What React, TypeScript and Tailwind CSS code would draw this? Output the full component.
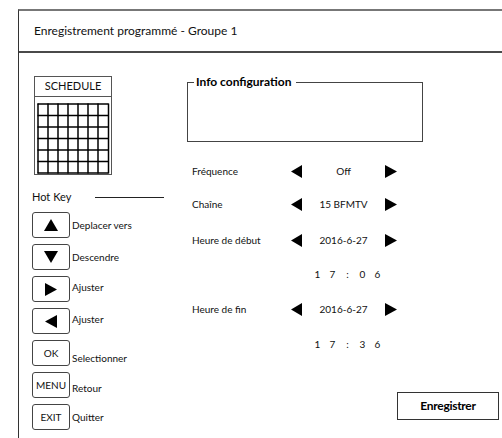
import React from 'react';

const FONT = "font-['Lato','Liberation_Sans',sans-serif]";

type Dir = 'up' | 'down' | 'left' | 'right';

function Tri({ dir, w, h }: { dir: Dir; w: number; h: number }) {
  const pts: Record<Dir, string> = {
    up: `${w / 2},0 ${w},${h} 0,${h}`,
    down: `0,0 ${w},0 ${w / 2},${h}`,
    left: `${w},0 ${w},${h} 0,${h / 2}`,
    right: `0,0 ${w},${h / 2} 0,${h}`,
  };
  return (
    <svg width={w} height={h} viewBox={`0 0 ${w} ${h}`}>
      <polygon points={pts[dir]} fill="#000" />
    </svg>
  );
}

function Schedule() {
  const cols = 7;
  const rows = 6;
  const cw = 10;
  const ch = 11.5;
  return (
    <div className="ml-[2px] w-[78px] h-[99px] border border-[#555] flex flex-col">
      <div className="h-[20px] border-b border-[#555] flex items-center justify-center text-[11px] text-[#111]">
        SCHEDULE
      </div>
      <div className="pl-[2px] pt-[6px]">
        <svg width={73} height={71} viewBox="0 0 73 71">
          {Array.from({ length: cols + 1 }).map((_, i) => (
            <line key={'c' + i} x1={1 + i * cw + (i === cols ? 0.5 : 0)} y1={0.5} x2={1 + i * cw + (i === cols ? 0.5 : 0)} y2={70.5} stroke="#000" strokeWidth={1.5} />
          ))}
          {Array.from({ length: rows + 1 }).map((_, i) => (
            <line key={'r' + i} x1={0.5} y1={1 + i * ch} x2={71.5} y2={1 + i * ch} stroke="#000" strokeWidth={1.5} />
          ))}
        </svg>
      </div>
    </div>
  );
}

const keys: { icon: React.ReactNode; label: string; shift: string }[] = [
  { icon: <Tri dir="up" w={14} h={12} />, label: 'Deplacer vers', shift: '' },
  { icon: <Tri dir="down" w={14} h={12} />, label: 'Descendre', shift: '' },
  { icon: <Tri dir="right" w={12} h={13} />, label: 'Ajuster', shift: '-translate-y-[2px]' },
  { icon: <Tri dir="left" w={12} h={13} />, label: 'Ajuster', shift: '-translate-y-[2px]' },
  { icon: <span className="text-[10px]">OK</span>, label: 'Selectionner', shift: 'translate-y-[5px]' },
  { icon: <span className="text-[10px]">MENU</span>, label: 'Retour', shift: 'translate-y-[3px]' },
  { icon: <span className="text-[10px]">EXIT</span>, label: 'Quitter', shift: '' },
];

function Row({ label, value }: { label: string; value: string }) {
  return (
    <div className="h-[20px] flex items-center text-[10px] text-[#111]">
      <div className="w-[104px] pl-[5px]">{label}</div>
      <Tri dir="left" w={11} h={13} />
      <div className="w-[83px] text-center">{value}</div>
      <Tri dir="right" w={12} h={13} />
    </div>
  );
}

function Time({ digits }: { digits: string[] }) {
  return (
    <div className="h-[20px] flex items-center text-[10px] text-[#111]">
      <div className="w-[123px]" />
      {digits.map((d, i) => (
        <span key={i} className="w-[15px] text-center">{d}</span>
      ))}
    </div>
  );
}

export default function App() {
  return (
    <div className={`${FONT} w-[502px] h-[438px] bg-white overflow-hidden pt-[9px] pl-[18px]`}>
      <div className="h-[429px] border-l border-t-2 border-l-[#333] border-t-[#777] flex flex-col">
        {/* Header */}
        <div className="h-[42px] border-b-2 border-[#4a4a4a] flex items-center pl-[15px] text-[12px] text-[#111]">
          Enregistrement programmé - Groupe 1
        </div>

        <div className="flex flex-1">
          {/* Left column */}
          <div className="w-[168px] pl-[13px] pt-[23px] flex flex-col">
            <Schedule />
            <div className="mt-[14px] h-[16px] flex items-center text-[11px] text-[#111]">
              <span>Hot Key</span>
              <div className="ml-[24px] w-[69px] h-px bg-[#222]" />
            </div>
            <div className="mt-[7px] flex flex-col gap-[6px]">
              {keys.map((k, i) => (
                <div key={i} className="flex items-center">
                  <div className="w-[38px] h-[26px] rounded-[3px] border border-[#444] flex items-center justify-center text-[#111]">
                    {k.icon}
                  </div>
                  <span className={`ml-[2px] text-[10px] text-[#111] ${k.shift}`}>{k.label}</span>
                </div>
              ))}
            </div>
          </div>

          {/* Right column */}
          <div className="flex-1 flex flex-col pt-[29px]">
            <div className="relative w-[236px] h-[60px] border border-[#444]">
              <span className="absolute -top-[9px] left-[6px] pl-[2px] pr-[5px] bg-white text-[12px] font-bold leading-[16px] text-black">
                Info configuration
              </span>
            </div>
            <div className="mt-[19px] flex flex-col">
              <Row label="Fréquence" value="Off" />
              <div className="h-[13px]" />
              <Row label="Chaîne" value="15 BFMTV" />
              <div className="h-[16px]" />
              <Row label="Heure de début" value="2016-6-27" />
              <div className="h-[14px]" />
              <Time digits={['1', '7', ':', '0', '6']} />
              <div className="h-[15px]" />
              <Row label="Heure de fin" value="2016-6-27" />
              <div className="h-[15px]" />
              <Time digits={['1', '7', ':', '3', '6']} />
            </div>
            <div className="mt-[38px] flex justify-end pr-[3px]">
              <div className="w-[102px] h-[28px] border border-[#333] flex items-center justify-center text-[12px] font-bold tracking-[-0.3px] text-black">
                Enregistrer
              </div>
            </div>
          </div>
        </div>
      </div>
    </div>
  );
}
